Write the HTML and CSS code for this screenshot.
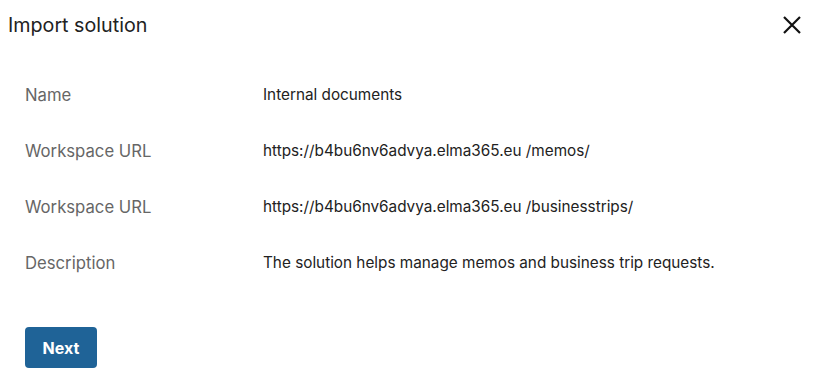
FILE: index.html
```html
<!DOCTYPE html>
<html>
<head>
<meta charset="utf-8">
<link rel="stylesheet" href="styles.css">
</head>
<body>
<div class="dialog">
  <div class="header">
    <h1 class="title">Import solution</h1>
    <button class="close" aria-label="Close">
      <svg width="20" height="20" viewBox="0 0 20 20"><path d="M2 2L18 18M18 2L2 18" stroke="#111" stroke-width="2.2" fill="none"/></svg>
    </button>
  </div>
  <div class="fields">
    <div class="row"><div class="label">Name</div><div class="value">Internal documents</div></div>
    <div class="row"><div class="label">Workspace URL</div><div class="value">https://b4bu6nv6advya.elma365.eu /memos/</div></div>
    <div class="row"><div class="label">Workspace URL</div><div class="value">https://b4bu6nv6advya.elma365.eu /businesstrips/</div></div>
    <div class="row"><div class="label">Description</div><div class="value">The solution helps manage memos and business trip requests.</div></div>
  </div>
  <div class="footer">
    <button class="btn">Next</button>
  </div>
</div>
</body>
</html>
```
FILE: styles.css
```css
html, body { margin: 0; padding: 0; background: #fff; }
body { font-family: Inter, Roboto, "Liberation Sans", sans-serif; }
.dialog { width: 820px; height: 371px; box-sizing: border-box; }
.header { display: flex; justify-content: space-between; align-items: center; padding: 12px 18px 0 8px; height: 26px; }
.title { margin: 0; font-size: 19.7px; font-weight: 400; color: #222; line-height: 26px; }
.close { border: 0; background: none; padding: 0; width: 20px; height: 20px; display: flex; }
.fields { padding: 45px 0 0 25px; }
.row { display: flex; height: 56px; align-items: flex-start; }
.label { width: 238px; font-size: 16.7px; color: #666; line-height: 24px; }
.value { font-size: 15.3px; color: #222; line-height: 24px; }
.footer { padding: 20px 0 0 25px; }
.btn { background: #1f6397; color: #fff; border: 0; border-radius: 4px; width: 72px; height: 41px; font-family: Inter, Roboto, "Liberation Sans", sans-serif; font-size: 16px; font-weight: 700; }
```
